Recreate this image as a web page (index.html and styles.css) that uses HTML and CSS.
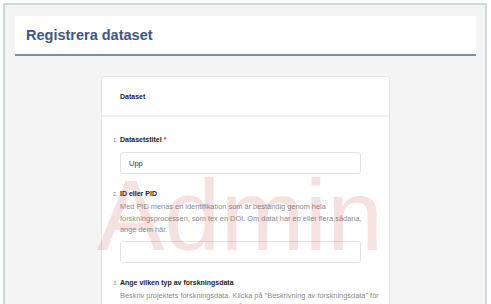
FILE: index.html
```html
<!DOCTYPE html>
<html lang="sv">
<head>
    <meta charset="UTF-8">
    <meta name="viewport" content="width=device-width, initial-scale=1.0">
    <title>Registrera dataset</title>
    <link rel="stylesheet" href="styles.css">
</head>
<body>
    <div class="frame">
        <div class="page-header">
            <h1>Registrera dataset</h1>
        </div>

        <div class="card">
            <div class="card-header">Dataset</div>
            <div class="card-body">
                <div class="question">
                    <div class="q-title"><span class="q-num">1.</span>Datasetstitel <span class="req">*</span></div>
                    <div class="q-content">
                        <input class="q-input" type="text" value="Upp">
                    </div>
                </div>

                <div class="question">
                    <div class="q-title"><span class="q-num">2.</span>ID eller PID</div>
                    <div class="q-content">
                        <p class="q-help">Med PID menas en identifikation som är beständig genom hela forskningsprocessen, som tex en DOI. Om datat har en eller flera sådana,<br>ange dem här.</p>
                        <input class="q-input" type="text">
                    </div>
                </div>

                <div class="question">
                    <div class="q-title"><span class="q-num">3.</span>Ange vilken typ av forskningsdata</div>
                    <div class="q-content">
                        <p class="q-help">Beskriv projektets forskningsdata. Klicka på "Beskrivning av forskningsdata" för mer information om vad som bör ingå i din beskrivning.</p>
                    </div>
                </div>
            </div>
        </div>
    </div>

    <div class="watermark">Admin</div>
</body>
</html>
```

FILE: styles.css
```css
body {
    font-family: "Liberation Sans", Arial, sans-serif;
    background-color: #fff;
    margin: 0;
    padding: 0;
    height: 304px;
    overflow: hidden;
}

.frame {
    margin: 3px 4px 0 3px;
    padding: 11px 9px 0 10px;
    height: 320px;
    background-color: #f4f4f4;
    border: 2px solid #c9dcd5;
    border-bottom: none;
}

.page-header {
    background: white;
    height: 38px;
    border-bottom: 2px solid #7e8ca6;
    display: flex;
    align-items: center;
}

h1 {
    margin: 0 0 0 11px;
    font-size: 14.5px;
    font-weight: bold;
    color: #3d5685;
}

.card {
    width: 287px;
    margin: 20px auto 0;
    background: white;
    border: 1px solid #e7e7e7;
    border-radius: 3px;
    height: 260px;
}

.card-header {
    height: 38px;
    display: flex;
    align-items: center;
    padding-left: 18px;
    font-size: 7px;
    font-weight: bold;
    color: #222;
    border-bottom: 2px solid #eeeeee;
}

.card-body {
    padding: 18px 0 0 11px;
}

.question {
    margin-bottom: 15px;
}

.q-title {
    display: flex;
    align-items: baseline;
    font-size: 7px;
    font-weight: bold;
    color: #1a1a1a;
    line-height: 10px;
}

.q-num {
    width: 7px;
    font-size: 5.5px;
    font-weight: normal;
    color: #888;
}

.req {
    color: #d0304a;
    margin-left: 2px;
}

.q-content {
    padding-left: 7px;
}

.q-input {
    display: block;
    box-sizing: border-box;
    width: 241px;
    height: 22px;
    margin-top: 7px;
    padding: 0 8px;
    border: 1px solid #e2e2e2;
    border-radius: 3px;
    font-family: inherit;
    font-size: 7.5px;
    color: #333;
    background: white;
}

.q-help {
    margin: 2px 0 0;
    width: 262px;
    font-size: 7.4px;
    line-height: 11.5px;
    color: #8a8a8a;
}

.q-help + .q-input {
    margin-top: 5px;
}

.watermark {
    position: absolute;
    left: 97px;
    top: 165px;
    font-family: "Liberation Sans", Arial, sans-serif;
    font-size: 101px;
    line-height: 1;
    color: rgba(200, 70, 70, 0.16);
    pointer-events: none;
}
```
